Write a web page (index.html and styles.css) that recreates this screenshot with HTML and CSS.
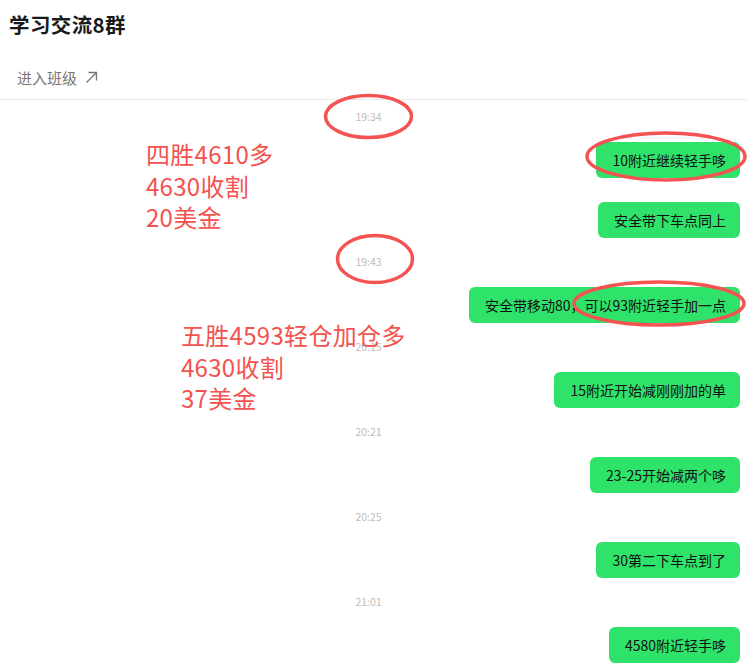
FILE: index.html
```html
<!DOCTYPE html>
<html lang="zh-CN">
<head>
<meta charset="utf-8">
<title>学习交流8群</title>
<link rel="stylesheet" href="styles.css">
</head>
<body>
<div class="page">
  <header class="header">
    <h1 class="title">学习交流8群</h1>
    <div class="enter">进入班级<svg class="arrow" width="13" height="13" viewBox="0 0 13 13"><path d="M1.5 11.5 L11.5 1.5 M3.5 1.5 H11.5 V9.5" fill="none" stroke="#777" stroke-width="1.4"/></svg></div>
  </header>
  <main class="chat">
    <div class="time">19:34</div>
    <div class="msg"><span class="bubble">10附近继续轻手哆</span></div>
    <div class="msg"><span class="bubble">安全带下车点同上</span></div>
    <div class="time">19:43</div>
    <div class="msg"><span class="bubble">安全带移动80，可以93附近轻手加一点</span></div>
    <div class="time">20:15</div>
    <div class="msg"><span class="bubble">15附近开始减刚刚加的单</span></div>
    <div class="time">20:21</div>
    <div class="msg"><span class="bubble">23-25开始减两个哆</span></div>
    <div class="time">20:25</div>
    <div class="msg"><span class="bubble">30第二下车点到了</span></div>
    <div class="time">21:01</div>
    <div class="msg"><span class="bubble">4580附近轻手哆</span></div>
  </main>
  <div class="note note1">四胜4610多<br>4630收割<br>20美金</div>
  <div class="note note2">五胜4593轻仓加仓多<br>4630收割<br>37美金</div>
  <svg class="marks" width="747" height="672" viewBox="0 0 747 672">
    <g fill="none" stroke="#f45352" stroke-width="3.5">
      <ellipse cx="368.5" cy="116.5" rx="43" ry="21"/>
      <ellipse cx="666" cy="156.5" rx="79" ry="23.5"/>
      <ellipse cx="375" cy="259" rx="37.5" ry="23.5"/>
      <ellipse cx="659" cy="303.5" rx="85" ry="21.5"/>
    </g>
  </svg>
</div>
</body>
</html>
```

FILE: styles.css
```css
* { box-sizing: border-box; }
html, body { margin: 0; padding: 0; background: #fff; }
body {
  font-family: "Noto Sans CJK SC", "Noto Sans", "Liberation Sans", sans-serif;
  color: #111;
}
.page {
  position: relative;
  width: 747px;
  height: 672px;
  overflow: hidden;
}
.header {
  height: 100px;
  border-bottom: 1px solid #e9e9e9;
  display: flex;
  flex-direction: column;
  padding-left: 9px;
}
.title {
  margin: 10px 0 0 0;
  font-size: 20.5px;
  line-height: 28px;
  font-weight: 700;
  color: #1a1a1a;
  letter-spacing: 0.4px;
}
.enter {
  margin-top: 28px;
  padding-left: 8px;
  font-size: 15px;
  line-height: 24px;
  color: #777;
  display: flex;
  align-items: center;
}
.arrow { margin-left: 8px; margin-top: -2px; }
.chat {
  display: flex;
  flex-direction: column;
  padding-right: 7px;
}
.time {
  margin-top: 11px;
  height: 12px;
  line-height: 12px;
  font-size: 10.5px;
  color: #bdbdbd;
  text-align: center;
  padding-right: 3px;
}
.msg + .time { margin-top: 18px; }
.msg {
  display: flex;
  justify-content: flex-end;
  margin-top: 24px;
}
.time + .msg { margin-top: 19px; }
.bubble {
  display: block;
  background: #2ee26a;
  border-radius: 6px;
  height: 36px;
  line-height: 36px;
  padding: 0 14px 0 16px;
  font-size: 14px;
  color: #111;
  white-space: nowrap;
}
.note {
  position: absolute;
  font-size: 24px;
  line-height: 31.5px;
  color: #f4524f;
  white-space: nowrap;
  letter-spacing: 0.3px;
}
.note1 { left: 146px; top: 138px; }
.note2 { left: 181px; top: 319px; }
.marks {
  position: absolute;
  left: 0;
  top: 0;
  pointer-events: none;
}
```
